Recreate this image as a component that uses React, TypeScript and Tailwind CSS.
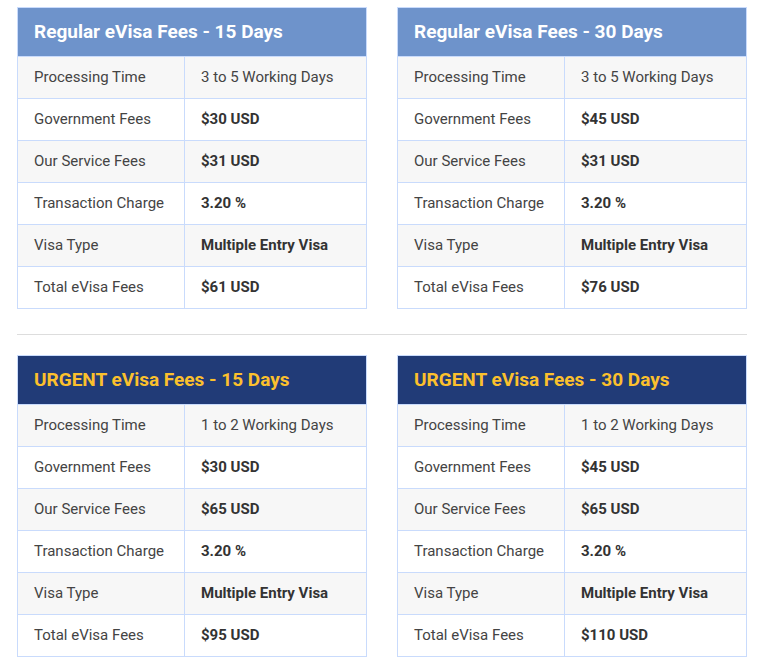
import React from "react";

type Row = [string, string];

const tables: { title: string; urgent: boolean; rows: Row[] }[] = [
  {
    title: "Regular eVisa Fees - 15 Days",
    urgent: false,
    rows: [
      ["Processing Time", "3 to 5 Working Days"],
      ["Government Fees", "$30 USD"],
      ["Our Service Fees", "$31 USD"],
      ["Transaction Charge", "3.20 %"],
      ["Visa Type", "Multiple Entry Visa"],
      ["Total eVisa Fees", "$61 USD"],
    ],
  },
  {
    title: "Regular eVisa Fees - 30 Days",
    urgent: false,
    rows: [
      ["Processing Time", "3 to 5 Working Days"],
      ["Government Fees", "$45 USD"],
      ["Our Service Fees", "$31 USD"],
      ["Transaction Charge", "3.20 %"],
      ["Visa Type", "Multiple Entry Visa"],
      ["Total eVisa Fees", "$76 USD"],
    ],
  },
  {
    title: "URGENT eVisa Fees - 15 Days",
    urgent: true,
    rows: [
      ["Processing Time", "1 to 2 Working Days"],
      ["Government Fees", "$30 USD"],
      ["Our Service Fees", "$65 USD"],
      ["Transaction Charge", "3.20 %"],
      ["Visa Type", "Multiple Entry Visa"],
      ["Total eVisa Fees", "$95 USD"],
    ],
  },
  {
    title: "URGENT eVisa Fees - 30 Days",
    urgent: true,
    rows: [
      ["Processing Time", "1 to 2 Working Days"],
      ["Government Fees", "$45 USD"],
      ["Our Service Fees", "$65 USD"],
      ["Transaction Charge", "3.20 %"],
      ["Visa Type", "Multiple Entry Visa"],
      ["Total eVisa Fees", "$110 USD"],
    ],
  },
];

function FeeTable({ title, urgent, rows }: { title: string; urgent: boolean; rows: Row[] }) {
  return (
    <table className="w-[350px] border-collapse border border-[#c9dbfc] table-fixed">
      <colgroup>
        <col className="w-[167px]" />
        <col />
      </colgroup>
      <thead>
        <tr>
          <th
            colSpan={2}
            className={`h-[49px] px-4 text-left text-[19px] font-bold ${
              urgent ? "bg-[#213b77] text-[#fbc02d]" : "bg-[#6e93cb] text-white"
            }`}
          >
            {title}
          </th>
        </tr>
      </thead>
      <tbody>
        {rows.map(([label, value], i) => (
          <tr key={label} className={i % 2 === 0 ? "bg-[#f7f7f7]" : "bg-white"}>
            <td className="h-[42px] px-4 border border-[#c9dbfc] text-[15px] text-[#444]">{label}</td>
            <td
              className={`h-[42px] px-4 border border-[#c9dbfc] text-[15px] ${
                i === 0 ? "font-normal text-[#444]" : "font-bold text-[#333]"
              }`}
            >
              {value}
            </td>
          </tr>
        ))}
      </tbody>
    </table>
  );
}

export default function App() {
  return (
    <div className="bg-white min-h-screen pt-[7px] pl-[17px] font-['Roboto',sans-serif]">
      <div className="flex gap-[30px]">
        <FeeTable {...tables[0]} />
        <FeeTable {...tables[1]} />
      </div>
      <hr className="w-[730px] mt-[25px] mb-[20px] border-0 border-t border-[#dddddd]" />
      <div className="flex gap-[30px]">
        <FeeTable {...tables[2]} />
        <FeeTable {...tables[3]} />
      </div>
    </div>
  );
}
